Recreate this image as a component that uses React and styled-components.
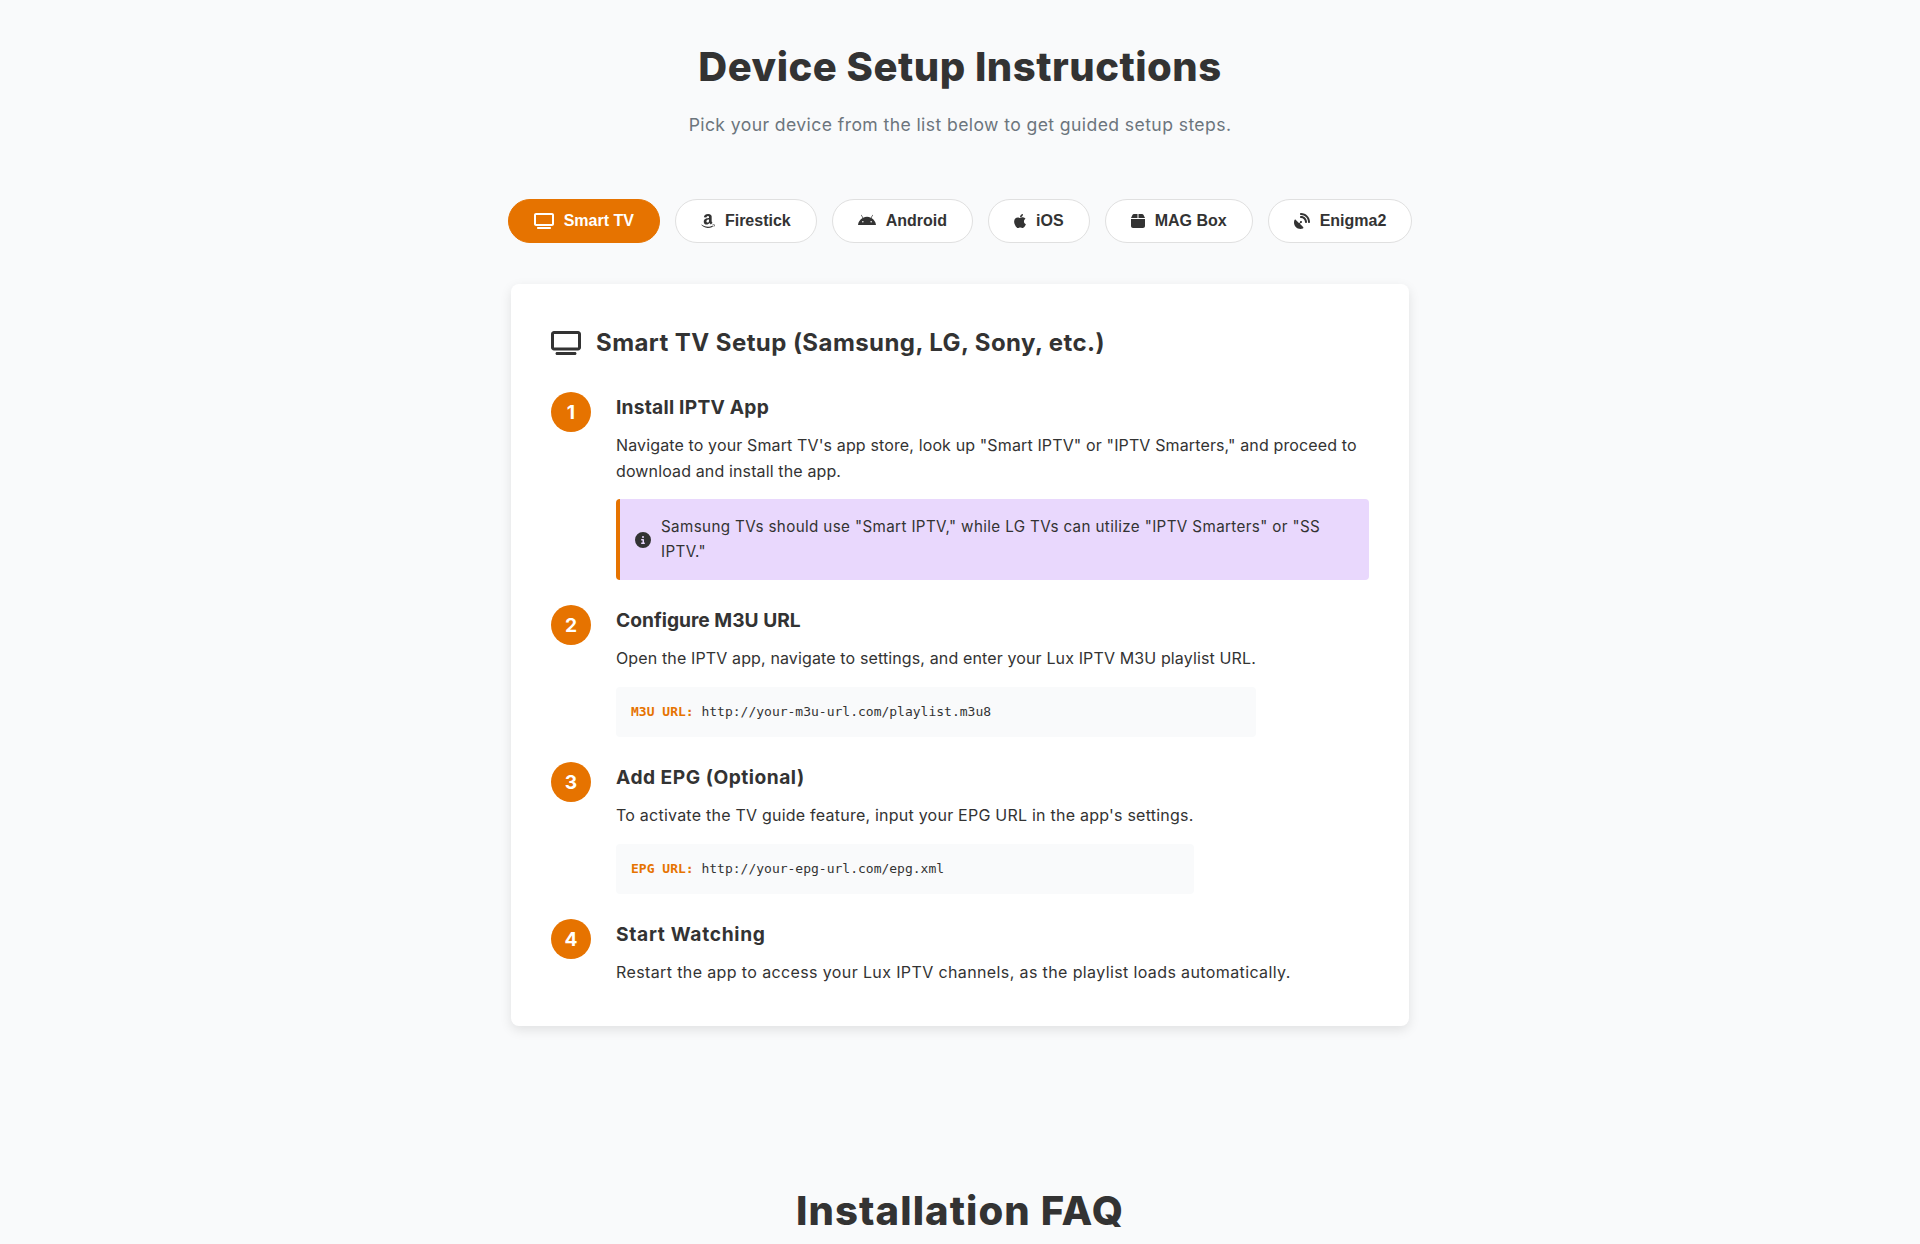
import React from "react";
import styled, { createGlobalStyle } from "styled-components";
import { FaTv, FaAmazon, FaAndroid, FaApple, FaBox, FaSatelliteDish, FaCircleInfo } from "react-icons/fa6";

const Global = createGlobalStyle`
  html, body { margin: 0; padding: 0; background: #f9fafb; }
  body { font-family: Inter, "Open Sans", sans-serif; font-size: 16px; line-height: 1.6; color: #333; overflow-x: hidden; }
  * { box-sizing: border-box; }
`;

const Page = styled.main`
  display: flex;
  flex-direction: column;
  align-items: center;
  padding-top: 35px;
`;

const Title = styled.h2`
  margin: 0 0 12px;
  font-size: 40px;
  font-weight: 800;
  line-height: 64px;
  color: #333;
  text-align: center;
  letter-spacing: 0.5px;
`;

const Subtitle = styled.p`
  margin: 0 0 60px;
  font-size: 17.6px;
  line-height: 28px;
  color: #6c757d;
  text-align: center;
  letter-spacing: 0.4px;
`;

const Tabs = styled.div`
  display: flex;
  justify-content: center;
  gap: 15px;
  margin-bottom: 41px;
`;

const Tab = styled.button`
  display: inline-flex;
  align-items: center;
  gap: 10px;
  height: 44px;
  padding: 0 25px;
  border: 1px solid ${(p) => (p.$active ? "#e67300" : "#e0e0e0")};
  border-radius: 22px;
  background: ${(p) => (p.$active ? "#e67300" : "#fff")};
  color: ${(p) => (p.$active ? "#fff" : "#333")};
  font-family: "Liberation Sans", Arial, sans-serif;
  font-size: 16px;
  font-weight: 700;
  svg { width: ${(p) => p.$iconWidth}px; height: 16px; flex: none; }
`;

const Card = styled.section`
  width: 898px;
  padding: 40px;
  background: #fff;
  border-radius: 8px;
  box-shadow: 0 4px 12px rgba(0, 0, 0, 0.1);
`;

const CardHeading = styled.h3`
  display: flex;
  align-items: center;
  gap: 15px;
  margin: 0 0 30px;
  font-size: 24px;
  font-weight: 700;
  line-height: 38.4px;
  color: #333;
  letter-spacing: 0.43px;
  svg { width: 30px; height: 24px; flex: none; }
`;

const Steps = styled.ol`
  display: flex;
  flex-direction: column;
  gap: 25px;
  margin: 0;
  padding: 0;
  list-style: none;
`;

const Step = styled.li`
  display: flex;
  align-items: flex-start;
  gap: 25px;
`;

const StepNumber = styled.span`
  flex: none;
  display: flex;
  align-items: center;
  justify-content: center;
  width: 40px;
  height: 40px;
  border-radius: 50%;
  background: #e67300;
  color: #fff;
  font-size: 19.2px;
  font-weight: 700;
`;

const StepBody = styled.div`
  min-width: 0;
`;

const StepTitle = styled.h4`
  margin: 0 0 9.9px;
  font-size: 19.2px;
  font-weight: 700;
  line-height: 30.7px;
  color: #333;
  letter-spacing: ${(p) => p.$tracking}px;
`;

const StepText = styled.p`
  margin: 0;
  font-size: 16px;
  line-height: 25.6px;
  color: #333;
  letter-spacing: ${(p) => p.$tracking}px;
`;

const Note = styled.div`
  display: flex;
  align-items: center;
  gap: 10px;
  margin-top: 15px;
  padding: 16px 15px;
  background: #e9d8fd;
  border-left: 4px solid #e67300;
  border-radius: 4px;
  font-size: 15.2px;
  line-height: 24.6px;
  color: #333;
  letter-spacing: 0.37px;
  svg { flex: none; }
`;

const CodeBlock = styled.div`
  margin-top: 15px;
  padding: 15px;
  background: #f9fafb;
  border-radius: 4px;
  font-family: "DejaVu Sans Mono", monospace;
  font-size: 13px;
  line-height: 20.8px;
  color: #333;
  strong { color: #e67300; font-weight: 700; }
`;

const FaqTitle = styled(Title)`
  margin: 153px 0 0;
  letter-spacing: 1.1px;
`;

const STEPS = [
  { t: "Install IPTV App", tt: 0.23, dt: 0.13, d: `Navigate to your Smart TV's app store, look up "Smart IPTV" or "IPTV Smarters," and proceed to download and install the app.`, note: `Samsung TVs should use "Smart IPTV," while LG TVs can utilize "IPTV Smarters" or "SS IPTV."` },
  { t: "Configure M3U URL", tt: 0, dt: 0.13, d: "Open the IPTV app, navigate to settings, and enter your Lux IPTV M3U playlist URL.", label: "M3U URL:", code: "http://your-m3u-url.com/playlist.m3u8" },
  { t: "Add EPG (Optional)", tt: 0.5, dt: 0.23, d: "To activate the TV guide feature, input your EPG URL in the app's settings.", label: "EPG URL:", code: "http://your-epg-url.com/epg.xml" },
  { t: "Start Watching", tt: 0.7, dt: 0.38, d: "Restart the app to access your Lux IPTV channels, as the playlist loads automatically." },
];

const TABS = [
  { n: "Smart TV", I: FaTv, w: 20, active: true },
  { n: "Firestick", I: FaAmazon, w: 14 },
  { n: "Android", I: FaAndroid, w: 18 },
  { n: "iOS", I: FaApple, w: 12 },
  { n: "MAG Box", I: FaBox, w: 14 },
  { n: "Enigma2", I: FaSatelliteDish, w: 16 },
];

export default function App() {
  return (
    <Page>
      <Global />
      <Title>Device Setup Instructions</Title>
      <Subtitle>Pick your device from the list below to get guided setup steps.</Subtitle>
      <Tabs>
        {TABS.map(({ n, I, w, active }) => (
          <Tab key={n} $active={active} $iconWidth={w}><I />{n}</Tab>
        ))}
      </Tabs>
      <Card>
        <CardHeading><FaTv />Smart TV Setup (Samsung, LG, Sony, etc.)</CardHeading>
        <Steps>
          {STEPS.map((s, i) => (
            <Step key={s.t}>
              <StepNumber>{i + 1}</StepNumber>
              <StepBody>
                <StepTitle $tracking={s.tt}>{s.t}</StepTitle>
                <StepText $tracking={s.dt}>{s.d}</StepText>
                {s.note && <Note><FaCircleInfo size={16} /><span>{s.note}</span></Note>}
                {s.code && <CodeBlock><strong>{s.label}</strong> {s.code}</CodeBlock>}
              </StepBody>
            </Step>
          ))}
        </Steps>
      </Card>
      <FaqTitle>Installation FAQ</FaqTitle>
    </Page>
  );
}
